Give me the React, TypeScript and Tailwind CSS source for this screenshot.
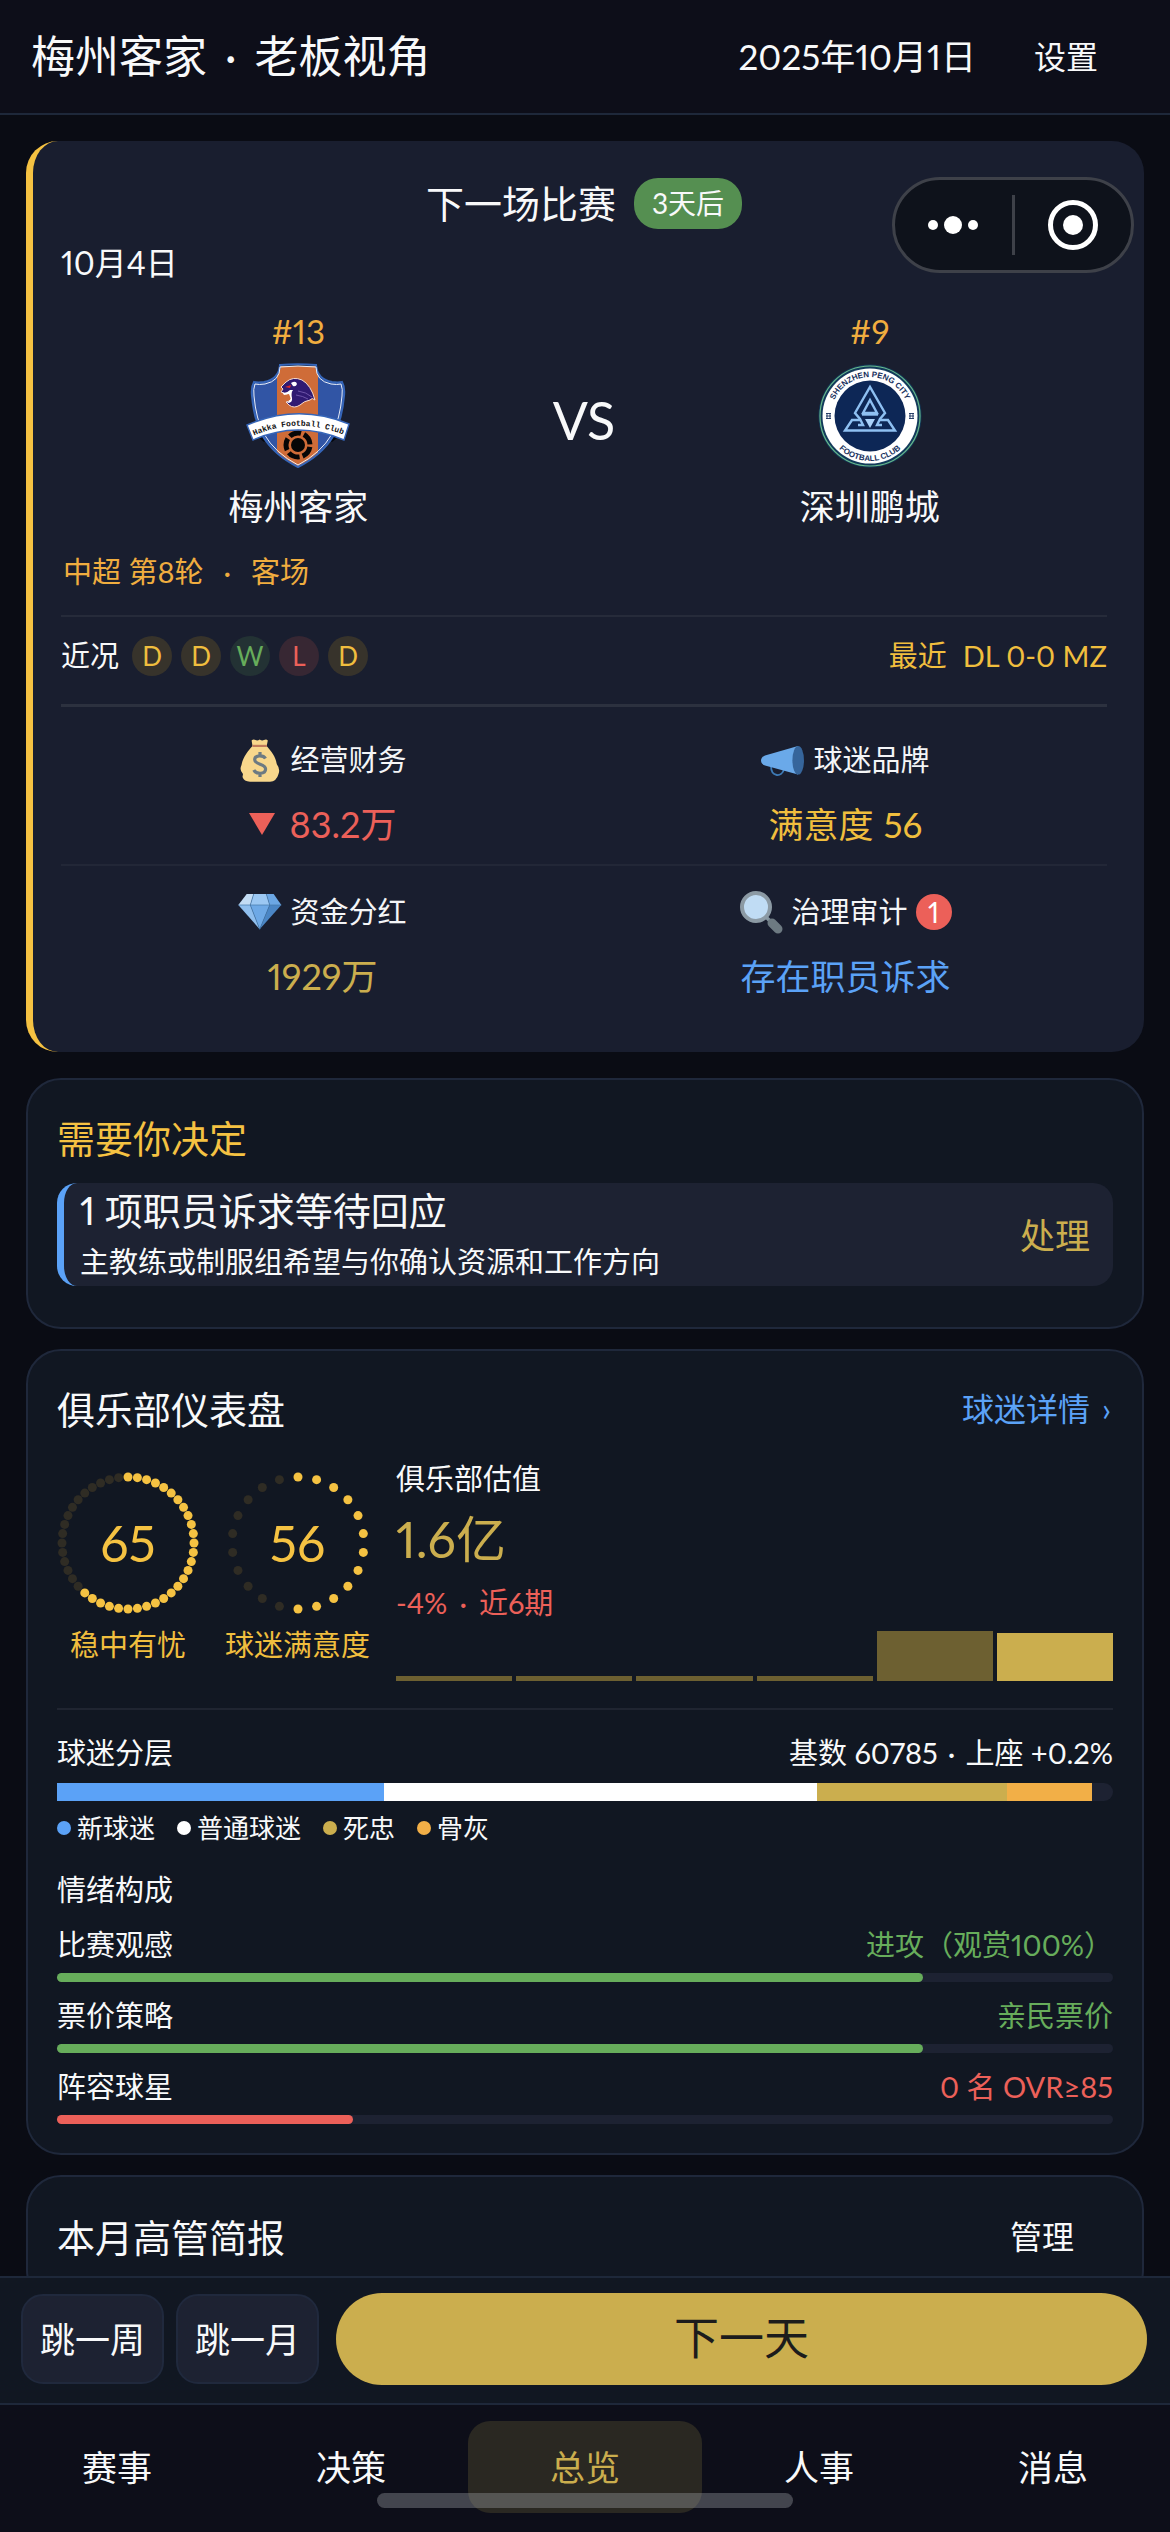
import type { ReactNode } from "react";

const GOLD = "#f5c242";

function MeizhouCrest() {
  return (
    <svg viewBox="0 0 104 106" className="h-[106px] w-[104px]" role="img" aria-label="梅州客家队徽">
      <defs>
        <clipPath id="mz-shield">
          <path d="M33 3H71Q71 16 86 19Q92 20 96 19Q99 24 98 33Q96 56 88 72Q76 92 52 104Q28 92 16 72Q8 56 6 33Q5 24 8 19Q12 20 18 19Q33 16 33 3Z" />
        </clipPath>
        <path id="mz-arc" d="M7 73Q52 53 98 72" />
      </defs>
      <path d="M8 71L18 79L26 73ZM96 71L86 79L78 73Z" fill="#05060a" />
      <g clipPath="url(#mz-shield)">
        <rect width="104" height="106" fill="#3155a5" />
        <rect x="31" width="41" height="106" fill="#cf6c38" />
      </g>
      <path
        d="M34 2Q52 .5 70 2Q71 16 86 19Q92 20 96 19Q99 24 98 33Q96 56 88 72Q76 92 52 104Q28 92 16 72Q8 56 6 33Q5 24 8 19Q12 20 18 19Q33 16 34 2Z"
        fill="none"
        stroke="#3565b8"
        strokeWidth="2"
      />
      <path
        d="M34 4Q52 2 70 4Q70 18 85 21Q91 22 95 21Q97 26 96 33Q94 56 86 71Q75 90 52 102Q29 90 18 71Q10 56 8 33Q7 26 9 21Q13 22 19 21Q34 18 34 4Z"
        fill="none"
        stroke="#e8eef8"
        strokeWidth="1"
      />
      <path
        d="M35 24L40 19Q47 13 56 17Q65 22 69 37Q66 34 64 37Q58 38 54 42Q48 46 43 42L40 39Q46 38 45 33L45 29L40 31L35 29L37 26Z"
        fill="#301a72"
        stroke="#f3d9cf"
        strokeWidth="1"
      />
      <path d="M36 29Q40 31 44 27L47 27Q44 31 46 35Q47 40 41 40L45 36L43 31L38 32ZM45 20Q50 17 51 21Q50 24 47 23Z" fill="#fff" />
      <path d="M39 24L45 22L44 25Z" fill="#e02a2a" />
      <path d="M52 28Q60 29 66 34M50 32Q57 33 62 36" fill="none" stroke="#7c62b5" strokeWidth="0.8" />
      <circle cx="52" cy="82" r="12" fill="none" stroke="#060606" strokeWidth="5" strokeDasharray="12 3.08" strokeDashoffset="-2" />
      <circle cx="52" cy="82" r="7" fill="#060606" />
      <path d="M1 62Q52 40 103 61L98 77Q52 57 7 77Z" fill="#fff" stroke="#3565b8" strokeWidth="1.4" />
      <text fill="#111" fontSize="8" fontWeight="700" fontFamily="Liberation Mono, monospace" textAnchor="middle">
        <textPath href="#mz-arc" startOffset="50%">
          Hakka Football Club
        </textPath>
      </text>
    </svg>
  );
}

function ShenzhenCrest() {
  return (
    <svg viewBox="0 0 104 106" className="h-[106px] w-[104px]" role="img" aria-label="深圳鹏城队徽">
      <defs>
        <path id="sz-top" d="M13 53A39 39 0 0 1 91 53" />
        <path id="sz-bottom" d="M7 53A45 45 0 0 0 97 53" />
      </defs>
      <circle cx="52" cy="53" r="51.5" fill="#123a5a" />
      <circle cx="52" cy="53" r="50" fill="#123a5a" stroke="#69b98a" strokeWidth="1.2" />
      <circle cx="52" cy="53" r="47.5" fill="#fff" />
      <circle cx="52" cy="53" r="35.5" fill="#0d2756" />
      <g fill="none" stroke="#8ec0f2" strokeWidth="2.4">
        <path d="M40 62H45L42 56L37 50L52 24L67 50L62 56L59 62H64" />
        <path d="M42 57H34L27 67.500H77L70 57H62" />
        <path d="M52 37L45 50H59Z" />
        <path d="M44 51.500H60" />
      </g>
      <path d="M47 56H57L52 65Z" fill="#a9d2fb" />
      <g fill="#17305c" fontWeight="700" fontFamily="Liberation Sans, sans-serif" textAnchor="middle">
        <text fontSize="8">
          <textPath href="#sz-top" startOffset="50%">
            SHENZHEN PENG CITY
          </textPath>
        </text>
        <text fontSize="8">
          <textPath href="#sz-bottom" startOffset="50%">
            FOOTBALL CLUB
          </textPath>
        </text>
      </g>
      <g stroke="#17305c" strokeWidth="0.9" fill="none">
        <path d="M8 50.500H13M8 53H13M8 55.500H13M9 50V56M12 50V56" />
        <path d="M91 50.500H96M91 53H96M91 55.500H96M92 50V56M95 50V56" />
      </g>
    </svg>
  );
}

function MoneyBagIcon() {
  return (
    <svg viewBox="0 0 44 44" className="size-[44px]" aria-hidden="true">
      <path
        d="M14.500 8L13.600 2.500Q15.500 .6 17.500 2Q19.500 3 21.700 1.500Q24 3 26 2Q28.500 .6 29.800 2.500L28.700 8C33 13 38 19 38.700 26Q42.500 31 40.500 36Q38.500 43.500 32 43.700H12Q6 43.500 4.500 39L5 36Q1 32 3.500 27C5 19 10 13 14.500 8Z"
        fill="#f8d78c"
      />
      <path d="M14.500 6.800H28.900V9H14.500Z" fill="#c07a5c" />
      <path
        d="M27.500 20.500C25.500 17 16.700 16.500 16.700 21.800C16.700 27 27.600 25.500 27.600 31C27.600 36.500 18 36.500 15.800 32M22 14V18M22 35V39"
        fill="none"
        stroke="#6d7a82"
        strokeWidth="3.200"
      />
    </svg>
  );
}

function MegaphoneIcon() {
  return (
    <svg viewBox="0 0 44 44" className="size-[44px]" aria-hidden="true">
      <path d="M10 28C10 39 21 40 23 31" fill="none" stroke="#3d7ab5" strokeWidth="1.800" />
      <path d="M37 8L4 17.500Q0 19 0 22.500Q0 26 4 27.500L37 36.500Z" fill="#6aa9e9" />
      <ellipse cx="37.200" cy="22.300" rx="5.800" ry="14.300" fill="#36659b" />
    </svg>
  );
}

function DiamondIcon() {
  return (
    <svg viewBox="0 0 44 44" className="size-[44px]" aria-hidden="true">
      <path d="M8.700 4H15.700L12.300 15H.3Z" fill="#c3dcf4" />
      <path d="M15.700 4H28.300L31.700 15H12.300Z" fill="#9cc8f3" />
      <path d="M28.300 4H35.700L43.300 15H31.700Z" fill="#6ca7e4" />
      <path d="M.3 15H12.300L21.700 39.300Z" fill="#90bfee" />
      <path d="M12.300 15H31.700L21.700 39.300Z" fill="#6ea9e6" />
      <path d="M31.700 15H43.300L21.700 39.300Z" fill="#4b86c5" />
      <path d="M15.700 4L12.300 15L21.700 39.300L31.700 15L28.300 4M.3 15H43.300" fill="none" stroke="#4579ab" strokeWidth="0.700" />
    </svg>
  );
}

function LoupeIcon() {
  return (
    <svg viewBox="0 0 44 44" className="size-[44px]" aria-hidden="true">
      <path d="M27 27L33 33" stroke="#8796a0" strokeWidth="3.500" />
      <path d="M33 33L39 39" stroke="#6d7a82" strokeWidth="9" strokeLinecap="round" />
      <circle cx="17" cy="17" r="14" fill="#c0dcf4" stroke="#8c9aa4" strokeWidth="4" />
    </svg>
  );
}

function Gauge({ value, dots, label }: { value: number; dots: number; label: string }) {
  const lit = Math.floor((value / 100) * dots);
  return (
    <div className="flex flex-col items-center">
      <div className="grid place-items-center">
        <svg viewBox="0 0 142 142" className="col-start-1 row-start-1 size-[142px]" aria-hidden="true">
          {Array.from({ length: dots }, (_, i) => {
            const a = (i / dots) * Math.PI * 2;
            return (
              <circle
                key={i}
                cx={71 + 66 * Math.sin(a)}
                cy={71 - 66 * Math.cos(a)}
                r={4.5}
                fill={i < lit ? GOLD : "#2f2c24"}
              />
            );
          })}
        </svg>
        <span className="col-start-1 row-start-1 text-[50px] leading-[60px] text-[#f5c242]">{value}</span>
      </div>
      <span className="mt-[11px] text-[29px] leading-[40px] text-[#f0be3e]">{label}</span>
    </div>
  );
}

function Cell({ icon, label, badge, children }: { icon: ReactNode; label: string; badge?: number; children: ReactNode }) {
  return (
    <div className="flex flex-col items-center gap-[20px]">
      <div className="flex h-[44px] items-center gap-[8px] text-[29px] text-[#f4f5f7]">
        {icon}
        <span>{label}</span>
        {badge !== undefined && (
          <span className="grid size-[36px] place-items-center rounded-full bg-[#ec6059] text-[28px] leading-[36px] text-white">
            {badge}
          </span>
        )}
      </div>
      <div className="flex h-[44px] items-center text-[35px]">{children}</div>
    </div>
  );
}

const form = [
  { r: "D", c: "bg-[#37332b] text-[#f0be3e]" },
  { r: "D", c: "bg-[#37332b] text-[#f0be3e]" },
  { r: "W", c: "bg-[#233234] text-[#67ad5b]" },
  { r: "L", c: "bg-[#372733] text-[#ec6059]" },
  { r: "D", c: "bg-[#37332b] text-[#f0be3e]" },
];

const segments = [
  { name: "新球迷", pct: 31, c: "bg-[#5ba2f7]" },
  { name: "普通球迷", pct: 41, c: "bg-white" },
  { name: "死忠", pct: 18, c: "bg-[#cbae4e]" },
  { name: "骨灰", pct: 8, c: "bg-[#f2af47]" },
];

const moods = [
  { name: "比赛观感", value: "进攻（观赏100%）", pct: 82, bar: "bg-[#67ad5b]", text: "text-[#67ad5b]" },
  { name: "票价策略", value: "亲民票价", pct: 82, bar: "bg-[#67ad5b]", text: "text-[#67ad5b]" },
  { name: "阵容球星", value: "0 名 OVR≥85", pct: 28, bar: "bg-[#ec6059]", text: "text-[#ec6059]" },
];

const bars = [
  { h: 10, c: "bg-[#6d6031]" },
  { h: 10, c: "bg-[#6d6031]" },
  { h: 10, c: "bg-[#6d6031]" },
  { h: 10, c: "bg-[#6d6031]" },
  { h: 100, c: "bg-[#6d6031]" },
  { h: 96, c: "bg-[#cbae4e]" },
];

const tabs = ["赛事", "决策", "总览", "人事", "消息"];

export default function App() {
  return (
    <div
      lang="zh-CN"
      className="relative flex h-screen flex-col bg-[#0a0c14] font-['Lato','Noto_Sans_CJK_SC',sans-serif] text-[#f8f9fa] proportional-nums"
    >
      <header className="flex items-center border-b-2 border-[#1e283a] bg-[#0d0e19] py-[34px] pr-[72px] pl-[31px]">
        <h1 className="flex gap-[18px] text-[44px] leading-[45px]">
          <span>梅州客家</span>
          <span>·</span>
          <span>老板视角</span>
        </h1>
        <time className="ml-auto text-[35px] leading-[45px]">2025年10月1日</time>
        <button type="button" className="ml-[58px] text-[32px] leading-[45px]">
          设置
        </button>
      </header>

      <main className="flex min-h-0 flex-1 flex-col overflow-y-auto px-[26px] pt-[26px] [scrollbar-width:none]">
        <section className="shrink-0 rounded-[32px] border-l-[7px] border-[#f5c242] bg-[#191e2f] pt-[37px] pr-[37px] pb-[54px] pl-[28px]">
          <div className="flex items-center justify-center gap-[18px]">
            <h2 className="text-[38px] leading-[51px]">下一场比赛</h2>
            <span className="rounded-[24px] bg-[#558f51] px-[18px] text-[28px] leading-[51px]">3天后</span>
          </div>
          <p className="mt-[14px] text-[32px] leading-[40px]">10月4日</p>

          <div className="mt-[28px] grid grid-cols-[1fr_97px_1fr] items-center">
            <div className="flex flex-col items-center">
              <span className="text-[33px] leading-[40px] text-[#f0ad3f]">#13</span>
              <div className="mt-[12px]">
                <MeizhouCrest />
              </div>
              <span className="mt-[15px] text-[35px] leading-[44px]">梅州客家</span>
            </div>
            <span className="text-center text-[52px] leading-[60px]">VS</span>
            <div className="flex flex-col items-center">
              <span className="text-[33px] leading-[40px] text-[#f0ad3f]">#9</span>
              <div className="mt-[12px]">
                <ShenzhenCrest />
              </div>
              <span className="mt-[15px] text-[35px] leading-[44px]">深圳鹏城</span>
            </div>
          </div>

          <p className="mt-[24px] flex gap-[20px] pl-[2px] text-[29px] leading-[40px] text-[#f0ad3f]">
            <span>中超 第8轮</span>
            <span>·</span>
            <span>客场</span>
          </p>

          <div className="mt-[23px] flex items-center border-t-2 border-b-3 border-t-[#262b3a] border-b-[#2c313f] pt-[19px] pb-[28px] text-[29px] leading-[40px]">
            <span>近况</span>
            <ul className="ml-[13px] flex gap-[9px]">
              {form.map((f, i) => (
                <li key={i} className={`grid size-[40px] place-items-center rounded-full text-[26px] leading-[40px] ${f.c}`}>
                  {f.r}
                </li>
              ))}
            </ul>
            <span className="ml-auto flex gap-[16px] text-[#f0be3e]">
              <span>最近</span>
              <span>DL 0-0 MZ</span>
            </span>
          </div>

          <div className="grid grid-cols-2 border-b-2 border-[#222737] pt-[31px] pb-[18px]">
            <Cell icon={<MoneyBagIcon />} label="经营财务">
              <span className="flex items-center gap-[15px] text-[36px] text-[#ec6059]">
                <svg viewBox="0 0 26 22" className="h-[22px] w-[26px]" aria-hidden="true">
                  <path d="M0 0H26L13 22Z" fill="currentColor" />
                </svg>
                83.2万
              </span>
            </Cell>
            <Cell icon={<MegaphoneIcon />} label="球迷品牌">
              <span className="flex gap-[10px] text-[#f0be3e]">
                <span>满意度</span>
                <span>56</span>
              </span>
            </Cell>
          </div>
          <div className="grid grid-cols-2 pt-[24px]">
            <Cell icon={<DiamondIcon />} label="资金分红">
              <span className="text-[36px] text-[#cbae4e]">1929万</span>
            </Cell>
            <Cell icon={<LoupeIcon />} label="治理审计" badge={1}>
              <span className="text-[#5ba2f7]">存在职员诉求</span>
            </Cell>
          </div>
        </section>

        <section className="mt-[26px] shrink-0 rounded-[35px] border-2 border-[#1f283b] bg-[#111722] px-[29px] pt-[33px] pb-[41px]">
          <h2 className="text-[38px] leading-[50px] text-[#f5c242]">需要你决定</h2>
          <div className="mt-[20px] flex items-center rounded-[20px] border-l-[7px] border-[#5ba2f7] bg-[#1d2232] pr-[23px] pl-[16px]">
            <div>
              <p className="text-[38px] leading-[54px]">1 项职员诉求等待回应</p>
              <p className="text-[29px] leading-[49px]">主教练或制服组希望与你确认资源和工作方向</p>
            </div>
            <button type="button" className="ml-auto text-[35px] leading-[44px] text-[#cbae4e]">
              处理
            </button>
          </div>
        </section>

        <section className="mt-[20px] shrink-0 rounded-[35px] border-2 border-[#1f283b] bg-[#111722] px-[29px] pt-[33px] pb-[29px]">
          <div className="flex items-center justify-between">
            <h2 className="text-[38px] leading-[50px]">俱乐部仪表盘</h2>
            <a href="#fans" className="flex gap-[12px] pr-[2px] text-[32px] leading-[50px] text-[#5ba2f7]">
              <span>球迷详情</span>
              <span>›</span>
            </a>
          </div>

          <div className="mt-[25px] flex gap-[26px] border-b-2 border-[#202531] pb-[27px]">
            <div className="flex gap-[26px] pt-[13px]">
              <Gauge value={65} dots={44} label="稳中有忧" />
              <Gauge value={56} dots={22} label="球迷满意度" />
            </div>
            <div className="flex flex-1 flex-col">
              <span className="text-[29px] leading-[40px]">俱乐部估值</span>
              <span className="mt-[10px] text-[50px] leading-[60px] text-[#cbae4e]">1.6亿</span>
              <span className="mt-[14px] flex gap-[12px] text-[29px] leading-[40px] text-[#ec6059]">
                <span>-4%</span>
                <span>·</span>
                <span>近6期</span>
              </span>
              <div className="mt-[8px] flex h-[50px] items-end gap-[4px]">
                {bars.map((b, i) => (
                  <div key={i} className={`flex-1 ${b.c}`} style={{ height: `${b.h}%` }} />
                ))}
              </div>
            </div>
          </div>

          <div className="mt-[23px] flex justify-between text-[29px] leading-[40px]">
            <span>球迷分层</span>
            <span className="flex gap-[10px]">
              <span>基数 60785</span>
              <span>·</span>
              <span>上座 +0.2%</span>
            </span>
          </div>
          <div className="mt-[10px] flex h-[18px] overflow-hidden rounded-r-[9px] bg-[#1d2232]">
            {segments.map((s) => (
              <div key={s.name} className={s.c} style={{ width: `${s.pct}%` }} />
            ))}
          </div>
          <ul className="mt-[9px] flex gap-[22px] text-[26px] leading-[36px]">
            {segments.map((s) => (
              <li key={s.name} className="flex items-center gap-[6px]">
                <span className={`size-[14px] rounded-full ${s.c}`} />
                {s.name}
              </li>
            ))}
          </ul>

          <h3 className="mt-[24px] mb-[15px] text-[29px] leading-[40px]">情绪构成</h3>
          <div className="flex flex-col gap-[14px]">
            {moods.map((m) => (
              <div key={m.name}>
                <div className="flex justify-between text-[29px] leading-[40px]">
                  <span>{m.name}</span>
                  <span className={m.text}>{m.value}</span>
                </div>
                <div className="mt-[8px] h-[9px] rounded-full bg-[#1d2232]">
                  <div className={`h-full rounded-full ${m.bar}`} style={{ width: `${m.pct}%` }} />
                </div>
              </div>
            ))}
          </div>
        </section>

        <section className="mt-[20px] shrink-0 rounded-[35px] border-2 border-[#1f283b] bg-[#111722] px-[29px] pt-[35px] pb-[41px]">
          <div className="flex items-center justify-between">
            <h2 className="text-[38px] leading-[50px]">本月高管简报</h2>
            <button type="button" className="px-[39px] text-[32px] leading-[50px]">
              管理
            </button>
          </div>
        </section>
      </main>

      <div className="flex items-center border-t-2 border-[#1e283a] bg-[#111722] pt-[15px] pr-[23px] pb-[18px] pl-[21px] text-[35px]">
        <button type="button" className="h-[90px] w-[143px] rounded-[22px] border-2 border-[#20293d] bg-[#1d2232]">
          跳一周
        </button>
        <button type="button" className="ml-[12px] h-[90px] w-[143px] rounded-[22px] border-2 border-[#20293d] bg-[#1d2232]">
          跳一月
        </button>
        <button type="button" className="ml-[17px] h-[92px] flex-1 rounded-full bg-[#cbae4e] text-[45px] text-[#1c1c1c]">
          下一天
        </button>
      </div>

      <nav className="grid grid-cols-5 border-t-2 border-[#1e283a] bg-[#0d0e19] pt-[16px] pb-[19px]">
        {tabs.map((t) => (
          <button
            key={t}
            type="button"
            aria-current={t === "总览" ? "page" : undefined}
            className={`h-[92px] rounded-[22px] text-[35px] ${t === "总览" ? "bg-[#2a2822] text-[#cbae4e]" : ""}`}
          >
            {t}
          </button>
        ))}
      </nav>

      <div className="absolute top-[177px] right-[36px] flex h-[96px] w-[242px] items-center rounded-full border-3 border-[#3e4149] bg-[#0e121b]">
        <button type="button" aria-label="更多" className="flex flex-1 items-center justify-center gap-[6px]">
          <span className="size-[10px] rounded-full bg-white" />
          <span className="size-[18px] rounded-full bg-white" />
          <span className="size-[10px] rounded-full bg-white" />
        </button>
        <span className="h-[60px] w-[3px] bg-[#3e4149]" />
        <button type="button" aria-label="关闭" className="flex flex-1 items-center justify-center">
          <span className="grid size-[50px] place-items-center rounded-full border-[5px] border-white">
            <span className="size-[20px] rounded-full bg-white" />
          </span>
        </button>
      </div>

      <div className="pointer-events-none absolute bottom-[24px] left-1/2 h-[15px] w-[416px] -translate-x-1/2 rounded-full bg-[#96989e]/40" />
    </div>
  );
}
